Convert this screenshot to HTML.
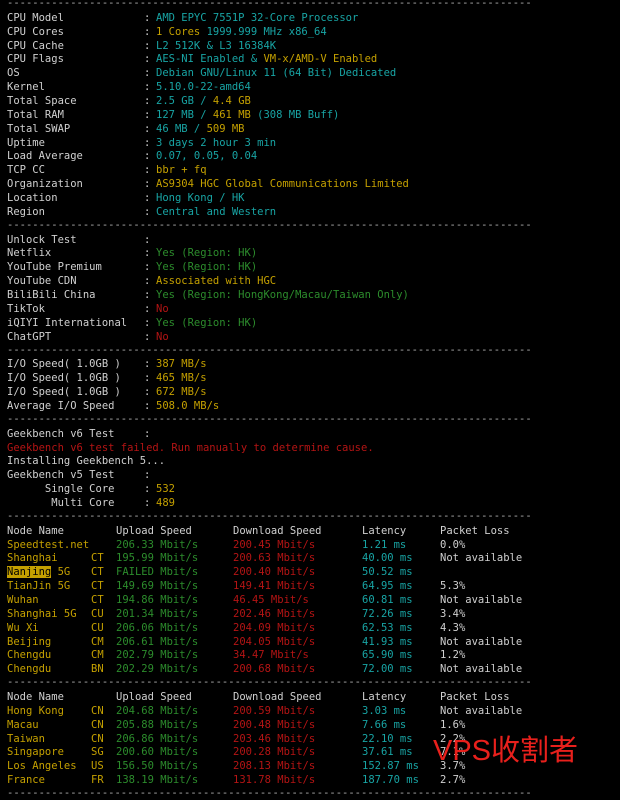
<!DOCTYPE html>
<html><head><meta charset="utf-8"><style>
html,body{margin:0;padding:0;background:#000;width:620px;height:800px;overflow:hidden}
body{position:relative;font-family:"DejaVu Sans Mono","Liberation Mono",monospace;font-size:10.5px;color:#d0d0d0}
.l{position:absolute;left:0;height:14px;line-height:14px;white-space:pre;width:620px}
.p{position:absolute;top:0}
.c{color:#18a4a4}.y{color:#c4a000}.g{color:#2c8c2c}.r{color:#b41414}.w{color:#d0d0d0}
.d{position:absolute;left:7px;white-space:pre;color:#b0b0b0}
.hl{background:#c4a000;color:#000}
.wm{position:absolute;left:433px;top:734px;color:#e8201c;font-family:"Liberation Sans","Noto Sans CJK SC",sans-serif;font-size:29px;line-height:34px}
</style></head><body>
<div id="c"></div>
<div class="wm">VPS收割者</div>
<script>
var D='-----------------------------------------------------------------------------------';
var L=[
['D'],
['k','CPU Model','<span class="c">AMD EPYC 7551P 32-Core Processor</span>'],
['k','CPU Cores','<span class="y">1 Cores</span> <span class="c">1999.999 MHz x86_64</span>'],
['k','CPU Cache','<span class="c">L2 512K &amp; L3 16384K</span>'],
['k','CPU Flags','<span class="c">AES-NI Enabled &amp; </span><span class="y">VM-x/AMD-V Enabled</span>'],
['k','OS','<span class="c">Debian GNU/Linux 11 (64 Bit) Dedicated</span>'],
['k','Kernel','<span class="c">5.10.0-22-amd64</span>'],
['k','Total Space','<span class="c">2.5 GB / </span><span class="y">4.4 GB</span>'],
['k','Total RAM','<span class="c">127 MB / </span><span class="y">461 MB</span><span class="c"> (308 MB Buff)</span>'],
['k','Total SWAP','<span class="c">46 MB / </span><span class="y">509 MB</span>'],
['k','Uptime','<span class="c">3 days 2 hour 3 min</span>'],
['k','Load Average','<span class="c">0.07, 0.05, 0.04</span>'],
['k','TCP CC','<span class="y">bbr + fq</span>'],
['k','Organization','<span class="y">AS9304 HGC Global Communications Limited</span>'],
['k','Location','<span class="c">Hong Kong / HK</span>'],
['k','Region','<span class="c">Central and Western</span>'],
['D'],
['k','Unlock Test',''],
['k','Netflix','<span class="g">Yes (Region: HK)</span>'],
['k','YouTube Premium','<span class="g">Yes (Region: HK)</span>'],
['k','YouTube CDN','<span class="y">Associated with HGC</span>'],
['k','BiliBili China','<span class="g">Yes (Region: HongKong/Macau/Taiwan Only)</span>'],
['k','TikTok','<span class="r">No</span>'],
['k','iQIYI International','<span class="g">Yes (Region: HK)</span>'],
['k','ChatGPT','<span class="r">No</span>'],
['D'],
['k','I/O Speed( 1.0GB )','<span class="y">387 MB/s</span>'],
['k','I/O Speed( 1.0GB )','<span class="y">465 MB/s</span>'],
['k','I/O Speed( 1.0GB )','<span class="y">672 MB/s</span>'],
['k','Average I/O Speed','<span class="y">508.0 MB/s</span>'],
['D'],
['k','Geekbench v6 Test',''],
['t','<span class="r">Geekbench v6 test failed. Run manually to determine cause.</span>'],
['t','Installing Geekbench 5...'],
['k','Geekbench v5 Test',''],
['k','      Single Core','<span class="y">532</span>'],
['k','       Multi Core','<span class="y">489</span>'],
['D'],
['h'],
['n','Speedtest.net','','206.33','200.45','1.21 ms','0.0%'],
['n','Shanghai','CT','195.99','200.63','40.00 ms','Not available'],
['n','<span class="hl">Nanjing</span> 5G','CT','FAILED','200.40','50.52 ms',''],
['n','TianJin 5G','CT','149.69','149.41','64.95 ms','5.3%'],
['n','Wuhan','CT','194.86','46.45','60.81 ms','Not available'],
['n','Shanghai 5G','CU','201.34','202.46','72.26 ms','3.4%'],
['n','Wu Xi','CU','206.06','204.09','62.53 ms','4.3%'],
['n','Beijing','CM','206.61','204.05','41.93 ms','Not available'],
['n','Chengdu','CM','202.79','34.47','65.90 ms','1.2%'],
['n','Chengdu','BN','202.29','200.68','72.00 ms','Not available'],
['D'],
['h'],
['n','Hong Kong','CN','204.68','200.59','3.03 ms','Not available'],
['n','Macau','CN','205.88','200.48','7.66 ms','1.6%'],
['n','Taiwan','CN','206.86','203.46','22.10 ms','2.2%'],
['n','Singapore','SG','200.60','200.28','37.61 ms','7.1%'],
['n','Los Angeles','US','156.50','208.13','152.87 ms','3.7%'],
['n','France','FR','138.19','131.78','187.70 ms','2.7%'],
['D']
];
function P(x,c,t){return '<span class="p '+(c||'')+'" style="left:'+x+'px">'+t+'</span>';}
var h='';
for(var i=0;i<L.length;i++){
 var t=3+i*13.86-6, r=L[i], s='';
 if(r[0]=='D') s='<span class="d" style="top:-1px">'+D+'</span>';
 else if(r[0]=='k') s=P(7,'',r[1])+P(144,'',':')+P(156,'',r[2]);
 else if(r[0]=='t') s=P(7,'',r[1]);
 else if(r[0]=='h') s=P(7,'','Node Name')+P(116,'','Upload Speed')+P(233,'','Download Speed')+P(362,'','Latency')+P(440,'','Packet Loss');
 else s=P(7,'y',r[1])+P(91,'y',r[2])+P(116,'g',r[3]+' Mbit/s')+P(233,'r',r[4]+' Mbit/s')+P(362,'c',r[5])+P(440,'w',r[6]);
 h+='<div class="l" style="top:'+t.toFixed(2)+'px">'+s+'</div>';
}
document.getElementById('c').innerHTML=h;
</script>
</body></html>
